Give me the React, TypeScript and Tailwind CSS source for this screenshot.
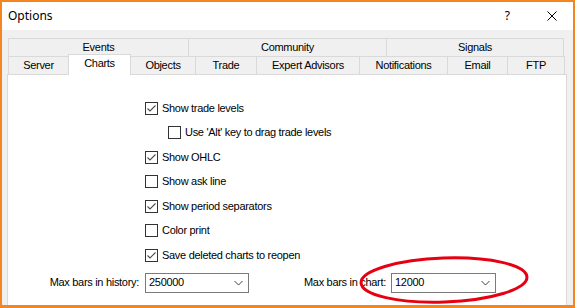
import type { ReactNode } from "react";

const ui = { fontFamily: '"Liberation Sans", Arial, sans-serif' };

function Check({ checked }: { checked: boolean }) {
  return (
    <span className="flex h-[13px] w-[13px] shrink-0 items-center justify-center border border-[#333333] bg-white">
      {checked && (
        <svg width="11" height="11" viewBox="0 0 11 11" fill="none">
          <path d="M1.5 5.5L4 8L9.5 2.5" stroke="#4d4d4d" strokeWidth="1.1" />
        </svg>
      )}
    </span>
  );
}

function Row({ checked, indent, children }: { checked: boolean; indent?: boolean; children: ReactNode }) {
  return (
    <div className={`flex h-[24.5px] items-center gap-[4px] ${indent ? "pl-[160px]" : "pl-[137px]"}`}>
      <Check checked={checked} />
      <span className="text-[11px] leading-none text-black">{children}</span>
    </div>
  );
}

function Combo({ value, width }: { value: string; width: string }) {
  return (
    <div className={`flex h-[20px] items-center justify-between border border-[#7a7a7a] bg-white pl-[3px] pr-[5px] ${width}`}>
      <span className="text-[11px] text-black">{value}</span>
      <svg width="9" height="6" viewBox="0 0 9 6" fill="none">
        <path d="M0.5 1L4.5 5L8.5 1" stroke="#404040" strokeWidth="1" />
      </svg>
    </div>
  );
}

const topTabs = [
  { label: "Events", w: "w-[180px]" },
  { label: "Community", w: "w-[198px]" },
  { label: "Signals", w: "w-[178px]" },
];

const tabs = [
  { label: "Server", w: "w-[60px]" },
  { label: "Charts", w: "w-[63px]", active: true },
  { label: "Objects", w: "w-[64px]" },
  { label: "Trade", w: "w-[61px]" },
  { label: "Expert Advisors", w: "w-[103px]" },
  { label: "Notifications", w: "w-[88px]" },
  { label: "Email", w: "w-[60px]" },
  { label: "FTP", w: "w-[58px]" },
];

export default function App() {
  return (
    <div
      className="relative flex h-[308px] w-[575px] flex-col overflow-hidden border-x-2 border-t-2 border-b-[3px] border-[#f5851f] bg-[#f0f0f0] tracking-[-0.3px]"
      style={ui}
    >
      {/* title bar */}
      <div className="flex h-[28px] shrink-0 items-center bg-white pl-[6px] tracking-normal">
        <span className="text-[12px] text-black" style={{ fontFamily: '"Noto Sans", sans-serif' }}>
          Options
        </span>
        <span className="ml-auto mr-[37px] text-[12px] text-black" style={{ fontFamily: '"Noto Sans", sans-serif' }}>
          ?
        </span>
        <svg className="mr-[16px]" width="10" height="10" viewBox="0 0 10 10" fill="none">
          <path d="M0.5 0.5L9.5 9.5M9.5 0.5L0.5 9.5" stroke="#000" strokeWidth="1" />
        </svg>
      </div>

      {/* tabs */}
      <div className="ml-[6px] mt-[8px] flex flex-col">
        <div className="flex">
          {topTabs.map((t, i) => (
            <div
              key={t.label}
              className={`flex h-[18px] items-center justify-center border-t border-l border-[#d9d9d9] text-[11px] text-black ${t.w} ${i === topTabs.length - 1 ? "border-r" : ""}`}
            >
              {t.label}
            </div>
          ))}
        </div>
        <div className="flex h-[18px]">
          {tabs.map((t, i) =>
            t.active ? (
              <div
                key={t.label}
                className={`relative z-10 -mt-[2px] flex h-[21px] items-center justify-center border-x border-t border-[#d9d9d9] bg-white pb-[3px] text-[11px] text-black ${t.w}`}
              >
                {t.label}
              </div>
            ) : (
              <div
                key={t.label}
                className={`flex h-[18px] items-center justify-center border-t border-[#d9d9d9] text-[11px] text-black ${t.w} ${i === tabs.length - 1 ? "border-r" : ""} ${tabs[i - 1]?.active ? "" : "border-l"}`}
              >
                {t.label}
              </div>
            )
          )}
        </div>
      </div>

      {/* panel */}
      <div className="ml-[5px] flex w-[560px] flex-1 flex-col border-x border-t border-[#d9d9d9] bg-white pt-[21px]">
        <Row checked>Show trade levels</Row>
        <Row checked={false} indent>
          Use 'Alt' key to drag trade levels
        </Row>
        <Row checked>Show OHLC</Row>
        <Row checked={false}>Show ask line</Row>
        <Row checked>Show period separators</Row>
        <Row checked={false}>Color print</Row>
        <Row checked>Save deleted charts to reopen</Row>

        <div className="mt-[5px] flex items-center">
          <span className="w-[131px] text-right text-[11px] text-black">Max bars in history:</span>
          <div className="ml-[6px]">
            <Combo value="250000" width="w-[104px]" />
          </div>
          <span className="w-[137px] text-right text-[11px] text-black">Max bars in chart:</span>
          <div className="ml-[5px]">
            <Combo value="12000" width="w-[105px]" />
          </div>
        </div>
      </div>

      {/* red highlight */}
      <svg className="pointer-events-none absolute left-[-2px] top-[-2px]" width="575" height="308" viewBox="0 0 575 308">
        <ellipse cx="444" cy="280" rx="83" ry="22" transform="rotate(-2 444 280)" fill="none" stroke="#e60012" strokeWidth="3" />
      </svg>
    </div>
  );
}
